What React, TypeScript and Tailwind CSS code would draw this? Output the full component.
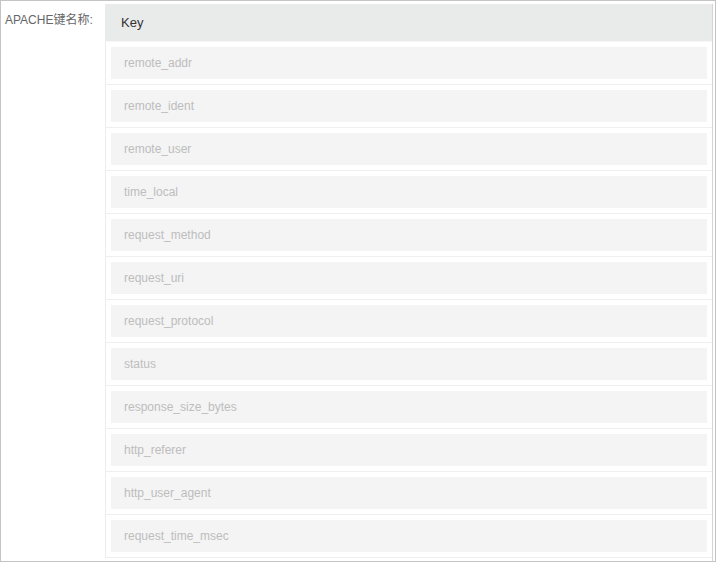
const keys = [
  'remote_addr',
  'remote_ident',
  'remote_user',
  'time_local',
  'request_method',
  'request_uri',
  'request_protocol',
  'status',
  'response_size_bytes',
  'http_referer',
  'http_user_agent',
  'request_time_msec',
];

export default function App() {
  return (
    <div className="w-[716px] h-[562px] border border-[#c4c4c4] bg-white overflow-hidden flex font-['Liberation_Sans',Arial,'Noto_Sans_CJK_SC',sans-serif]">
      {/* label column */}
      <div className="w-[104px] shrink-0 pl-[4px] pt-[11px] text-[12px] text-[#666] leading-[16px]">
        APACHE键名称:
      </div>

      {/* key table */}
      <div className="w-[608px] shrink-0 mt-[3px] border-r border-[#d4d4d4]">
        <div className="h-[37px] bg-[#e9ebeb] flex items-center pl-[16px] text-[13px] text-[#333]">
          Key
        </div>
        <div className="border-t border-[#f7f7f7] border-l border-l-[#ececec]">
          {keys.map((key) => (
            <div key={key} className="px-[5px] py-[5px] border-b border-[#efefef]">
              <input
                type="text"
                placeholder={key}
                readOnly
                className="block w-full h-[32px] bg-[#f4f4f4] pl-[13px] text-[12px] text-[#333] placeholder-[#bdbdbd] outline-none"
              />
            </div>
          ))}
        </div>
      </div>
    </div>
  );
}
